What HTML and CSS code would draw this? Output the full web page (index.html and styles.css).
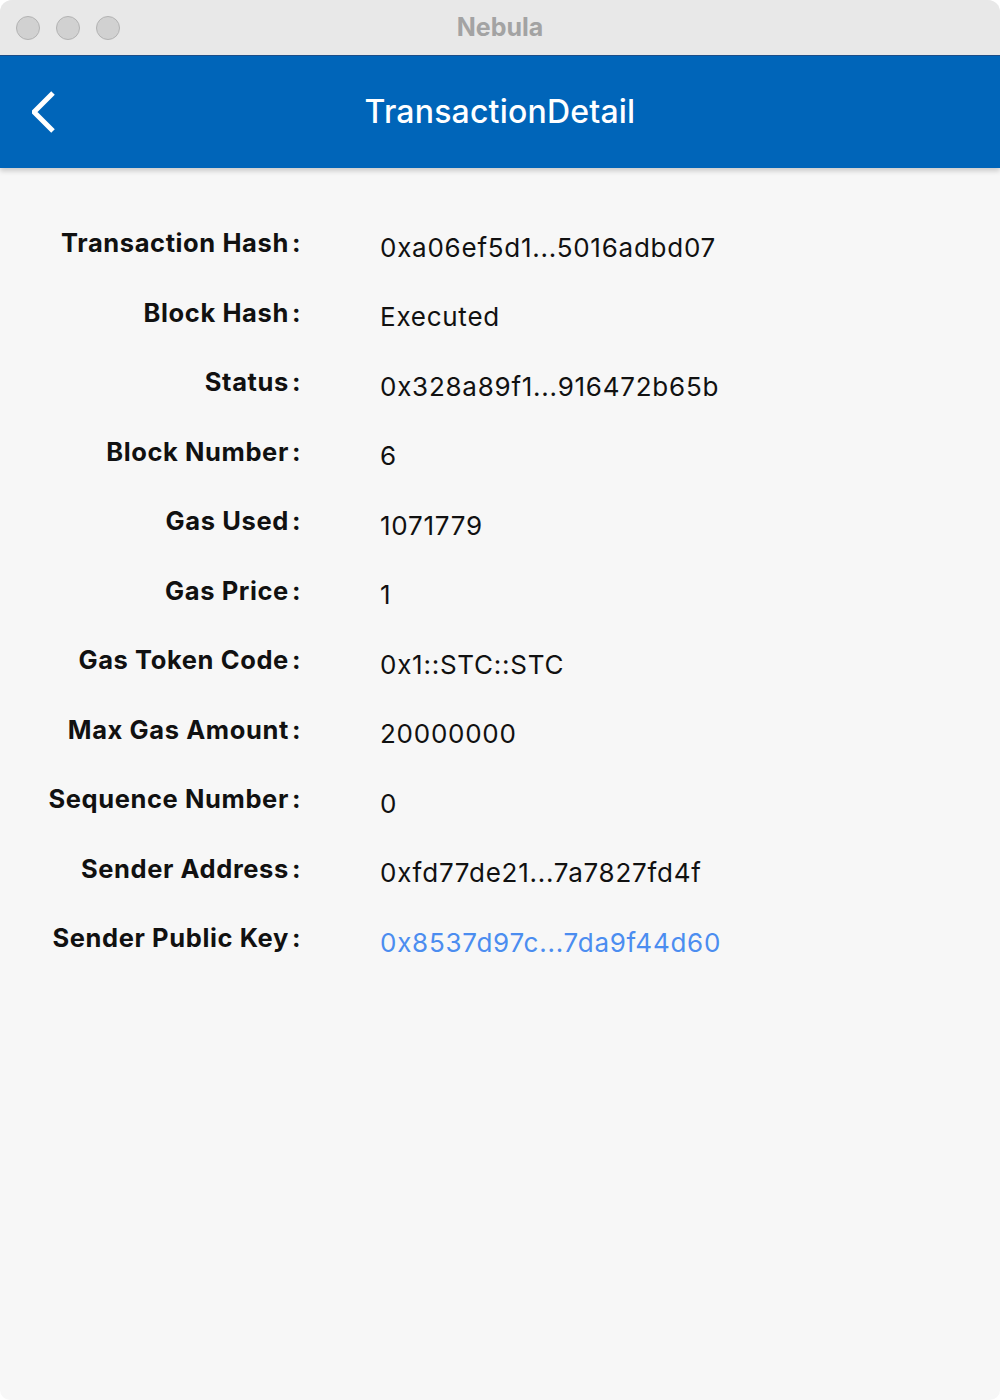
FILE: index.html
```html
<!DOCTYPE html>
<html>
<head>
<meta charset="utf-8">
<link rel="stylesheet" href="styles.css">
</head>
<body>
<div class="window">
  <div class="titlebar">
    <div class="lights">
      <span class="light"></span><span class="light"></span><span class="light"></span>
    </div>
    <div class="wtitle">Nebula</div>
  </div>
  <div class="appbar">
    <svg class="back" width="40" height="50" viewBox="0 0 40 50">
      <path d="M21 3 L2 22 L21 41" fill="none" stroke="#fff" stroke-width="5" stroke-linecap="butt" stroke-linejoin="miter"/>
    </svg>
    <div class="apptitle">TransactionDetail</div>
  </div>
  <div class="content">
    <div class="grid">
      <div class="label">Transaction Hash<span class="colon">:</span></div><div class="value">0xa06ef5d1...5016adbd07</div>
      <div class="label">Block Hash<span class="colon">:</span></div><div class="value">Executed</div>
      <div class="label">Status<span class="colon">:</span></div><div class="value">0x328a89f1...916472b65b</div>
      <div class="label">Block Number<span class="colon">:</span></div><div class="value">6</div>
      <div class="label">Gas Used<span class="colon">:</span></div><div class="value">1071779</div>
      <div class="label">Gas Price<span class="colon">:</span></div><div class="value">1</div>
      <div class="label">Gas Token Code<span class="colon">:</span></div><div class="value">0x1::STC::STC</div>
      <div class="label">Max Gas Amount<span class="colon">:</span></div><div class="value">20000000</div>
      <div class="label">Sequence Number<span class="colon">:</span></div><div class="value">0</div>
      <div class="label">Sender Address<span class="colon">:</span></div><div class="value">0xfd77de21...7a7827fd4f</div>
      <div class="label">Sender Public Key<span class="colon">:</span></div><div class="value link">0x8537d97c...7da9f44d60</div>
    </div>
  </div>
</div>
</body>
</html>
```
FILE: styles.css
```css
html, body {
  margin: 0;
  padding: 0;
  background: #ffffff;
}
body {
  font-family: Inter, "Noto Sans", "Liberation Sans", sans-serif;
}
.window {
  width: 1000px;
  height: 1400px;
  background: #f7f7f7;
  border-radius: 12px 12px 10px 10px;
  overflow: hidden;
  display: flex;
  flex-direction: column;
}
.titlebar {
  height: 55px;
  background: #e8e8e8;
  border-bottom: 1px solid #1d4f8a;
  display: flex;
  align-items: center;
  position: relative;
}
.lights {
  display: flex;
  gap: 16px;
  padding-left: 16px;
}
.light {
  width: 22px;
  height: 22px;
  border-radius: 50%;
  background: #d1d1d1;
  border: 1px solid #b3b3b3;
}
.wtitle {
  position: absolute;
  left: 0;
  right: 0;
  top: 12px;
  text-align: center;
  font-size: 25px;
  font-weight: 700;
  color: #a3a3a3;
  pointer-events: none;
}
.appbar {
  height: 112px;
  background: #0065b9;
  display: flex;
  align-items: center;
  justify-content: center;
  position: relative;
  box-shadow: 0 3px 5px rgba(0,0,0,0.18);
  z-index: 1;
}
.back {
  position: absolute;
  left: 32px;
  top: 34px;
}
.apptitle {
  color: #ffffff;
  font-size: 32px;
  font-weight: 500;
  letter-spacing: 0.2px;
  margin-top: -2px;
}
.content {
  flex: 1;
  padding-top: 40px;
}
.grid {
  display: grid;
  grid-template-columns: 301px auto;
  column-gap: 79px;
  grid-auto-rows: 69.5px;
  align-items: center;
}
.label {
  text-align: right;
  font-size: 25.5px;
  font-weight: 700;
  letter-spacing: 0.6px;
  color: #111;
}
.colon {
  margin-left: 3px;
}
.value {
  font-size: 26px;
  letter-spacing: 0.75px;
  color: #111;
  margin-top: 9px;
}
.value.link {
  color: #4b8df0;
}
```
